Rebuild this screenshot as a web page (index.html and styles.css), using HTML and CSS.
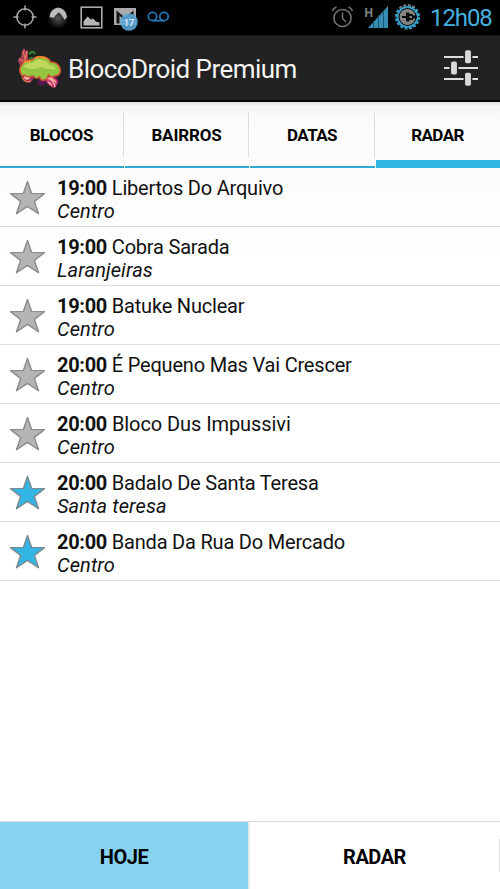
FILE: index.html
```html
<!DOCTYPE html>
<html lang="pt-BR">
<head>
<meta charset="utf-8">
<title>BlocoDroid Premium</title>
<link rel="stylesheet" href="styles.css">
</head>
<body>
<svg class="defs" width="0" height="0" aria-hidden="true">
  <symbol id="star" viewBox="0 0 36 34"><path d="M18 1.5 L22 13 L34.5 13.2 L24.7 20.8 L28.7 32.8 L18 25.6 L7.3 32.8 L11.3 20.8 L1.5 13.2 L14 13Z" stroke-width="1.4" stroke-linejoin="round"/></symbol>
</svg>
<div class="screen">
  <header class="statusbar">
    <svg class="notifications" width="180" height="34" viewBox="0 0 180 34">
      <g fill="none" stroke="#aaa" stroke-width="1.5"><circle cx="25" cy="17" r="8.2"/><path d="M25 5.500v5M25 23.500v5M13.500 17h5M31.500 17h5"/></g>
      <defs><radialGradient id="glow"><stop offset="0" stop-color="#555"/><stop offset="1" stop-color="#000"/></radialGradient></defs>
      <circle cx="58" cy="18" r="11" fill="url(#glow)"/>
      <path d="M49.500 17Q50 9 58 7.500Q66 8.500 67 17L64.500 20Q62 14.500 59 12.500Q57 13 53.500 18Z" fill="#bbb"/>
      <rect x="81.200" y="7.200" width="20.600" height="20.600" fill="none" stroke="#aaa" stroke-width="1.600"/>
      <path d="M83.500 25.500v-4l4-5 3.500 3 2-1 3 3 3.500 1v3z" fill="#b5b5b5"/>
      <path d="M114 8h22v17h-22z" fill="#aaa"/><path d="M116.500 10.500v13h3v-8l5.500 5.500 5.500-5.500v8h3v-13l-8.500 7z" fill="#171717"/>
      <circle cx="129" cy="22" r="8.800" fill="#5aa5d6" fill-opacity=".9"/>
      <text x="129" y="25.500" class="badge">17</text>
      <g fill="none" stroke="#2374b0" stroke-width="1.800"><circle cx="152.500" cy="16.500" r="4.200"/><circle cx="164" cy="16.500" r="4.200"/><path d="M152.500 20.700h11.500"/></g>
    </svg>
    <div class="system">
      <svg width="92" height="34" viewBox="330 0 92 34">
        <g fill="none" stroke="#747474" stroke-width="1.500"><circle cx="342.500" cy="18" r="8.600"/><path d="M342.500 12.500v6l3.500 3.500M332.500 11q1-3 4-4M348.500 7q3 1 4 4"/></g>
        <text x="364.500" y="16.500" class="network">H</text>
        <path d="M368 28 L388 6V28Z" fill="#368eb4"/><path d="M373.500 21v7M378.500 15v13M383.500 10v18" stroke="#164e67" stroke-width=".9"/>
        <circle cx="407.500" cy="17" r="11.400" fill="none" stroke="#389fca" stroke-width="2.400" stroke-dasharray="2.800 1.680"/>
        <circle cx="407.500" cy="17" r="9.900" fill="none" stroke="#389fca" stroke-width="1.800"/>
        <path d="M400 8A11.500 11.500 0 0 1 415 8" fill="none" stroke="#777" stroke-width="2" stroke-dasharray="2.500 1.800"/>
        <circle cx="407.500" cy="17" r="8" fill="#858585"/>
        <path d="M402 16h4v-3.500h3.500v1.500h3.500v2h-3.500v2h3.500v2h-3.500v1.500H406V18h-4z" fill="#0b0b0b"/>
        <path d="M412 15.500h5v3h-5z" fill="#0b0b0b"/>
      </svg>
      <span class="clock">12h08</span>
    </div>
  </header>

  <div class="actionbar">
    <svg class="logo" width="46" height="46" viewBox="16 45 46 46">
      <path d="M22 51l2-3 2 3 2-1 0 9-2 7-5 1-3-6 1-3 2-1z" fill="#a9405a"/>
      <path d="M23 51l3 12M27 51l-2 10M19 59l6 3" stroke="#d9795c" stroke-width="1.300"/>
      <path d="M31 62q2-3 0-5M29 54q4-4 6 0M29 59h6" fill="none" stroke="#317b2b" stroke-width="2.400"/>
      <circle cx="28" cy="77" r="5.500" fill="#a32e65"/><circle cx="27" cy="77" r="2.800" fill="#f6b6a4"/><path d="M22 77q3 7 9 4" fill="none" stroke="#eb8143" stroke-width="1.300"/>
      <path d="M37 83l5-8 14 1 3 5-3 6-6-1-3-4-4 4-5-1z" fill="#56154f"/>
      <path d="M46 78q9-4 12 4l-3 6q-6-1-9-7z" fill="#c83d76"/><path d="M47 78q7 1 8 9M50 77l6 5M48 82l4 3" fill="none" stroke="#ffb29a" stroke-width="1.300"/>
      <path d="M20.500 73q-2-5 2-9 1-4 10-4 1-3 8-3 9 0 10 5 9 0 10 9-1 5-6 5-3 2-6-1-1 4-4 5-4 1-5-3-4 3-6-1-7 2-9-1-3 2-4-2z" fill="#94c440" stroke="#cf5435" stroke-width="1.500"/>
      <path d="M23 67q4-5 10-4 3-5 9-3 6 1 7 5 4 0 7 4-9 1-15-2-6 4-18 0z" fill="#d2df65" opacity=".7"/>
      <path d="M24 62l7-1M35 58q6-3 12 1" fill="none" stroke="#ff8a27" stroke-width="1.500"/>
    </svg>
    <h1 class="title">BlocoDroid Premium</h1>
    <svg class="settings" width="38" height="38" viewBox="442 49 38 38">
      <path d="M444 57h34M444 68h34M444 79h34" stroke="#ddd" stroke-width="2"/>
      <g fill="#d9d9d9" stroke="#222" stroke-width="1.500"><rect x="464.300" y="49.500" width="7.400" height="14.500" rx="2.500"/><rect x="450.300" y="60.800" width="7.400" height="14.500" rx="2.500"/><rect x="464.300" y="72" width="7.400" height="14.500" rx="2.500"/></g>
    </svg>
  </div>

  <nav class="tabs">
    <div class="tab">BLOCOS</div>
    <div class="tab">BAIRROS</div>
    <div class="tab tight">DATAS</div>
    <div class="tab tight selected">RADAR</div>
  </nav>

  <main class="list">
    <div class="row"><svg class="star"><use href="#star"/></svg><div><p><b>19:00</b> Libertos Do Arquivo</p><p class="place">Centro</p></div></div>
    <div class="row"><svg class="star"><use href="#star"/></svg><div><p><b>19:00</b> Cobra Sarada</p><p class="place">Laranjeiras</p></div></div>
    <div class="row"><svg class="star"><use href="#star"/></svg><div><p><b>19:00</b> Batuke Nuclear</p><p class="place">Centro</p></div></div>
    <div class="row"><svg class="star"><use href="#star"/></svg><div><p><b>20:00</b> É Pequeno Mas Vai Crescer</p><p class="place">Centro</p></div></div>
    <div class="row"><svg class="star"><use href="#star"/></svg><div><p class="loose"><b>20:00</b> Bloco Dus Impussivi</p><p class="place">Centro</p></div></div>
    <div class="row"><svg class="star on"><use href="#star"/></svg><div><p><b>20:00</b> Badalo De Santa Teresa</p><p class="place">Santa teresa</p></div></div>
    <div class="row"><svg class="star on"><use href="#star"/></svg><div><p><b>20:00</b> Banda Da Rua Do Mercado</p><p class="place">Centro</p></div></div>
  </main>

  <footer class="bottom">
    <div class="choice active">HOJE</div>
    <div class="choice">RADAR</div>
    <i class="edge"></i>
  </footer>
</div>
</body>
</html>
```
FILE: styles.css
```css
* { box-sizing: border-box; }
body { margin: 0; font-family: Roboto, sans-serif; color: #111; background: #fff; }
p, h1 { margin: 0; }
.defs { position: absolute; }
.screen { width: 500px; height: 889px; display: flex; flex-direction: column; overflow: hidden; background: #fff; }
.statusbar { height: 35px; flex: none; background: #000; display: flex; justify-content: space-between; }
.notifications { display: block; }
.badge { font: bold 9px Roboto, sans-serif; fill: #d4eaff; text-anchor: middle; }
.network { font: bold 12px Roboto, sans-serif; fill: #858585; }
.system { display: flex; padding-right: 8px; }
.clock { width: 62px; margin-left: 8px; color: #44b0df; font-size: 24px; letter-spacing: -1.1px; line-height: 36px; white-space: nowrap; }
.actionbar { height: 67px; flex: none; padding: 0 20px 0 16px; background: #222; border-top: 1px solid #181818; border-bottom: 2px solid #080808; display: flex; align-items: center; }
.title { flex: 1; margin-left: 6px; padding-top: 2px; color: #f3f3f3; font-size: 26px; font-weight: 400; letter-spacing: -0.55px; line-height: 34px; white-space: nowrap; }
.settings { display: block; }
.tabs { height: 66px; flex: none; display: grid; grid-template-columns: 124px 124px 125px 124px; gap: 1px; background: linear-gradient(#dedede 0, #f5f5f5 4px, #fcfcfc 22px, #fcfcfc); }
.tab { border-bottom: 2px solid #31a9d2; display: flex; align-items: center; justify-content: center; font-size: 17px; font-weight: 700; letter-spacing: -0.15px; color: #000; padding: 2px 1px 0 0; background: linear-gradient(#dcdcdc, #dcdcdc) right 10px / 1px 45px no-repeat; }
.tight { letter-spacing: -0.6px; }
.tab.selected { border-bottom: 8px solid #33b5e5; padding-top: 8px; background: none; }
.list { flex: 1; background: linear-gradient(#fcfcfc, #fff 100px); }
.row { height: 59px; border-bottom: 1px solid #dedede; padding: 9px 0 0 9px; display: flex; gap: 11px; font-size: 20px; letter-spacing: -0.2px; line-height: 23px; white-space: nowrap; }
.row b { letter-spacing: -0.3px; }
.loose { letter-spacing: -0.08px; }
.star { width: 37px; height: 35px; margin-top: 3px; fill: #b5b5b5; stroke: #8c8c8c; }
.star.on { fill: #33b5e5; stroke: #7a8a91; }
.place { font-style: italic; letter-spacing: 0.1px; }
.bottom { height: 68px; flex: none; border-top: 1px solid #d9d9e8; display: grid; grid-template-columns: 248px 251px 1px; align-items: center; color: #000; }
.choice { height: 67px; display: flex; align-items: center; justify-content: center; padding-top: 3px; font-size: 20px; font-weight: 700; letter-spacing: -0.5px; border-left: 2px solid #e1e9ed; }
.choice.active { background: #87d2ee; border: 0; }
.edge { height: 33px; background: #ddd; }
```
